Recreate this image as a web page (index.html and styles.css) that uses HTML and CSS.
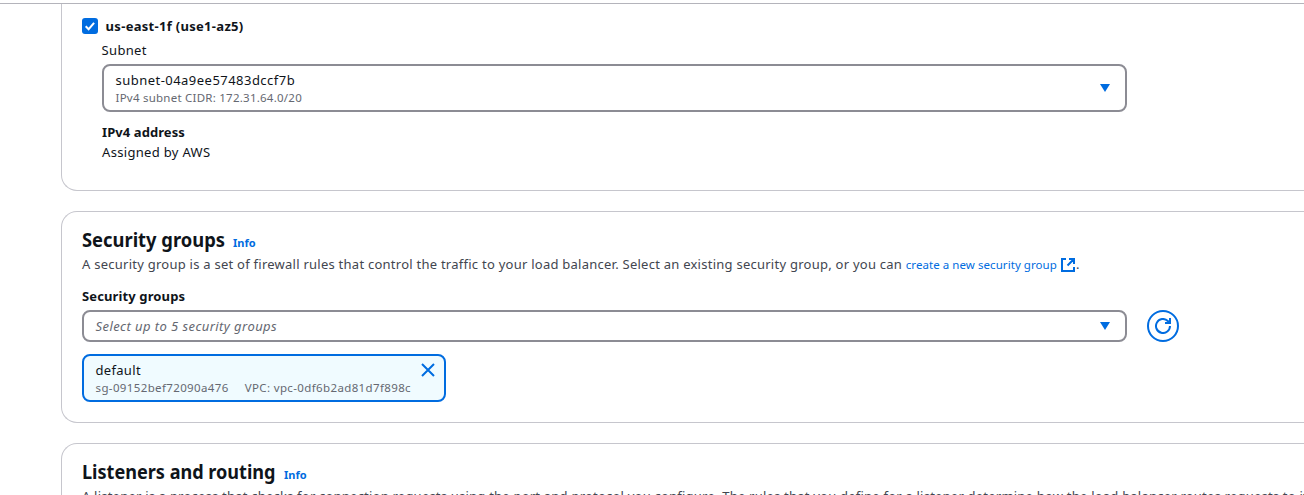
FILE: index.html
```
<!DOCTYPE html>
<html lang="en">
<head>
<meta charset="utf-8">
<title>Create load balancer</title>
<link rel="stylesheet" href="styles.css">
</head>
<body>
<div class="topbar"></div>
<main class="content">
  <section class="panel panel-network">
    <div class="zone">
      <span class="checkbox"><svg width="16" height="16" viewBox="0 0 16 16"><path d="M3.7 8.3 6.6 11.2 12.1 4.8" fill="none" stroke="#fff" stroke-width="2"/></svg></span>
      <div class="zone-body">
        <div class="zone-name">us-east-1f (use1-az5)</div>
        <div class="subnet-label">Subnet</div>
      </div>
    </div>
    <div class="zone-detail">
      <div class="select select-tall">
        <div class="option">
          <div class="option-title option-id">subnet-04a9ee57483dccf7b</div>
          <div class="option-meta">IPv4 subnet CIDR: 172.31.64.0/20</div>
        </div>
        <svg class="caret" width="10" height="8" viewBox="0 0 10 8"><path d="M0 0h10L5 8z"/></svg>
      </div>
      <div class="address-label">IPv4 address</div>
      <div class="address-value">Assigned by AWS</div>
    </div>
  </section>

  <section class="panel panel-security">
    <header class="heading"><h2 class="title-security">Security groups</h2><a class="info">Info</a></header>
    <p class="description">A security group is a set of firewall rules that control the traffic to your load balancer. Select an existing security group, or you can <a class="link">create a new security group</a><svg class="external" width="14" height="14" viewBox="0 0 14 14"><path d="M5 1H1v12h12V9M8 1h5v5M13 1 6.5 7.5" fill="none" stroke="#006ce0" stroke-width="2"/></svg>.</p>
    <div class="field-label">Security groups</div>
    <div class="field-row">
      <div class="select select-short">
        <em class="placeholder">Select up to 5 security groups</em>
        <svg class="caret" width="10" height="8" viewBox="0 0 10 8"><path d="M0 0h10L5 8z"/></svg>
      </div>
      <button class="refresh" aria-label="Refresh"><svg width="16" height="16" viewBox="0 0 16 16"><path d="M15 8a7 7 0 1 1-2.2-5.1L15 5M15 0v5h-5" fill="none" stroke="#006ce0" stroke-width="2"/></svg></button>
    </div>
    <div class="token">
      <div class="option">
        <div class="option-title">default</div>
        <div class="option-meta token-meta"><span>sg-09152bef72090a476</span><span>VPC: vpc-0df6b2ad81d7f898c</span></div>
      </div>
      <svg class="dismiss" width="14" height="14" viewBox="0 0 14 14"><path d="M1 1l12 12M13 1 1 13" stroke="#006ce0" stroke-width="2"/></svg>
    </div>
  </section>

  <section class="panel panel-listeners">
    <header class="heading"><h2 class="title-listeners">Listeners and routing</h2><a class="info">Info</a></header>
    <p class="description description-listeners">A listener is a process that checks for connection requests using the port and protocol you configure. The rules that you define for a listener determine how the load balancer routes requests to its registered targets.</p>
  </section>
</main>
</body>
</html>
```
FILE: styles.css
```
* { box-sizing: border-box; }
body {
  margin: 0;
  height: 495px;
  overflow: hidden;
  background: #fff;
  color: #0f141a;
  font: 13px/20px "Noto Sans", sans-serif;
  letter-spacing: 0.32px;
  font-variant-ligatures: common-ligatures;
}
h2, p { margin: 0; }
.topbar { height: 4px; border-bottom: 1px solid #b4b4bb; }
.content { width: 1243px; margin-left: 61px; display: flex; flex-direction: column; gap: 20px; }
.panel { border: 1px solid #c6c6cd; border-right: 0; border-radius: 16px 0 0 16px; padding: 0 0 0 20px; }
.panel-network { height: 187px; border-top: 0; border-radius: 0 0 0 16px; padding-top: 12px; }
.panel-security { height: 212px; padding-top: 15px; }
.panel-listeners { height: 52px; overflow: hidden; border-bottom: 0; border-radius: 16px 0 0 0; padding-top: 15px; }
.zone { display: flex; }
.zone-name { font-weight: 700; letter-spacing: 0.3px; }
.checkbox { width: 16px; height: 16px; margin: 2px 7.6px 0 0; border-radius: 3px; background: #006ce0; display: block; }
.checkbox svg { display: block; }
.subnet-label { margin: 4px 0 4px -4px; }
.zone-detail { padding-left: 20px; }
.select { width: 1045px; border: 2px solid #8c8c94; border-radius: 8px; display: flex; align-items: center; justify-content: space-between; padding: 0 15px 0 11.5px; }
.select-tall { width: 1025px; height: 48px; }
.select-short { height: 32px; }
.caret { fill: #006ce0; }
.option-title { line-height: 20px; }
.option-id { letter-spacing: 0.47px; }
.option-meta { font-size: 11.5px; line-height: 16px; letter-spacing: 0.24px; color: #656871; }
.address-label { margin-top: 10px; font-weight: 700; letter-spacing: 0.08px; }
.heading { display: flex; align-items: baseline; gap: 8px; height: 27px; letter-spacing: 0; }
h2 { font-size: 20px; line-height: 25px; white-space: nowrap; transform-origin: left; }
.title-security { width: 143px; transform: scaleX(0.917); }
.title-listeners { width: 194px; transform: scaleX(0.904); }
.info { font-size: 11px; font-weight: 700; color: #006ce0; }
.description { color: #424650; white-space: nowrap; letter-spacing: 0.25px; }
.description-listeners { letter-spacing: 0.218px; }
.link { font-size: 11.5px; letter-spacing: 0.06px; color: #006ce0; }
.external { margin: 0 1px 0 4px; vertical-align: -3px; }
.field-label { margin: 11px 0 4px; font-weight: 700; letter-spacing: 0.12px; }
.field-row { display: flex; gap: 20px; }
.placeholder { color: #656871; letter-spacing: 0.43px; }
.refresh { width: 32px; height: 32px; border: 2px solid #006ce0; border-radius: 50%; background: #fff; padding: 0; display: grid; place-items: center; }
.token { margin-top: 12px; width: 364px; height: 48px; border: 2px solid #006ce0; border-radius: 8px; background: #f0fbff; display: flex; justify-content: space-between; padding: 4px 9px 0 11.5px; }
.token-meta { display: flex; gap: 16px; letter-spacing: 0.37px; }
.dismiss { margin-top: 3px; }
```
